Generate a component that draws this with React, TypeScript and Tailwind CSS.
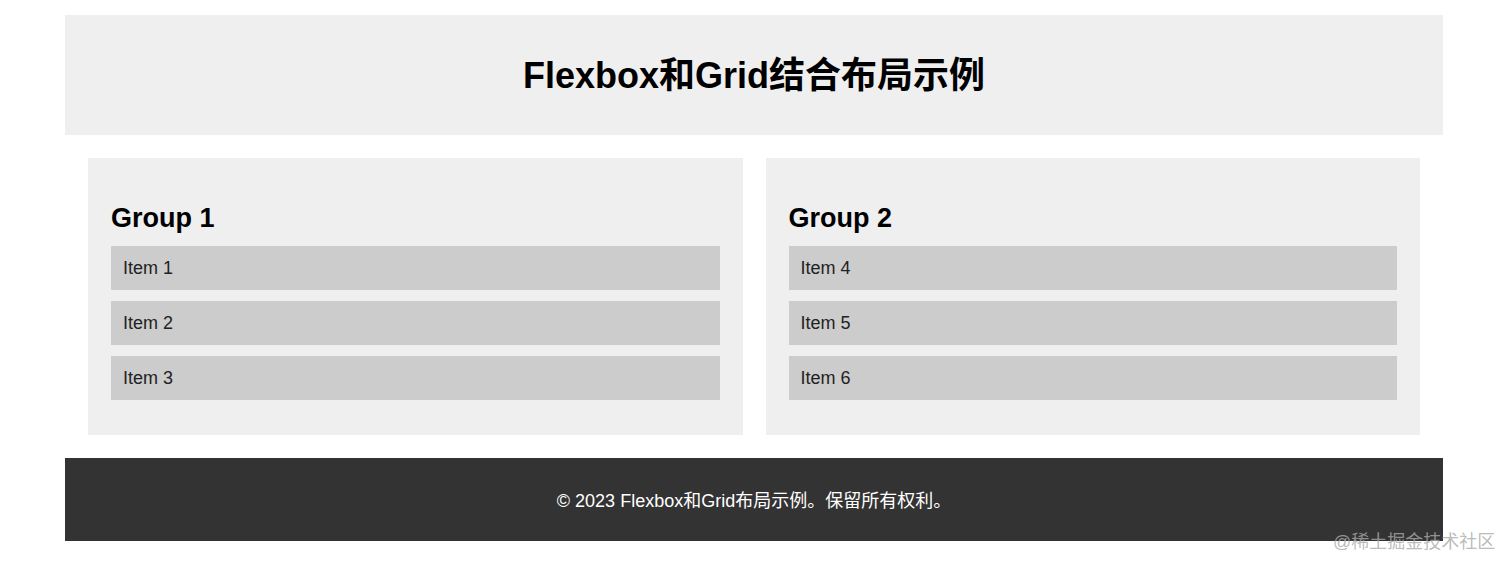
export default function App() {
  const groups = [
    { title: "Group 1", items: ["Item 1", "Item 2", "Item 3"] },
    { title: "Group 2", items: ["Item 4", "Item 5", "Item 6"] },
  ];
  return (
    <div
      className="relative min-h-[571px] bg-white text-black"
      style={{ fontFamily: '"Liberation Sans", Arial, "Noto Sans CJK SC", sans-serif' }}
    >
      <div className="ml-[65px] w-[1378px] pt-[15px]">
        <header className="flex h-[120px] items-center justify-center bg-[#efefef] pt-[2px]">
          <h1 className="text-[36px] font-bold leading-none">Flexbox和Grid结合布局示例</h1>
        </header>
        <main className="grid grid-cols-2 gap-[23px] p-[23px]">
          {groups.map((g) => (
            <section key={g.title} className="bg-[#efefef] px-[23px] pb-[35px] pt-[45px]">
              <h2 className="mb-[13px] h-[30px] text-[27px] font-bold leading-[30px]">{g.title}</h2>
              <div className="flex flex-col gap-[11px]">
                {g.items.map((it) => (
                  <div key={it} className="flex h-[44px] items-center bg-[#cccccc] pl-[12px] text-[18px] text-[#222]">
                    {it}
                  </div>
                ))}
              </div>
            </section>
          ))}
        </main>
        <footer className="flex h-[83px] items-center justify-center bg-[#333333] pt-[4px] text-[18px] text-white">
          © 2023 Flexbox和Grid布局示例。保留所有权利。
        </footer>
      </div>
      <div className="absolute left-[1333px] top-[531px] text-[18px] leading-[22px] text-[#aaaaaa]/80">
        @稀土掘金技术社区
      </div>
    </div>
  );
}
